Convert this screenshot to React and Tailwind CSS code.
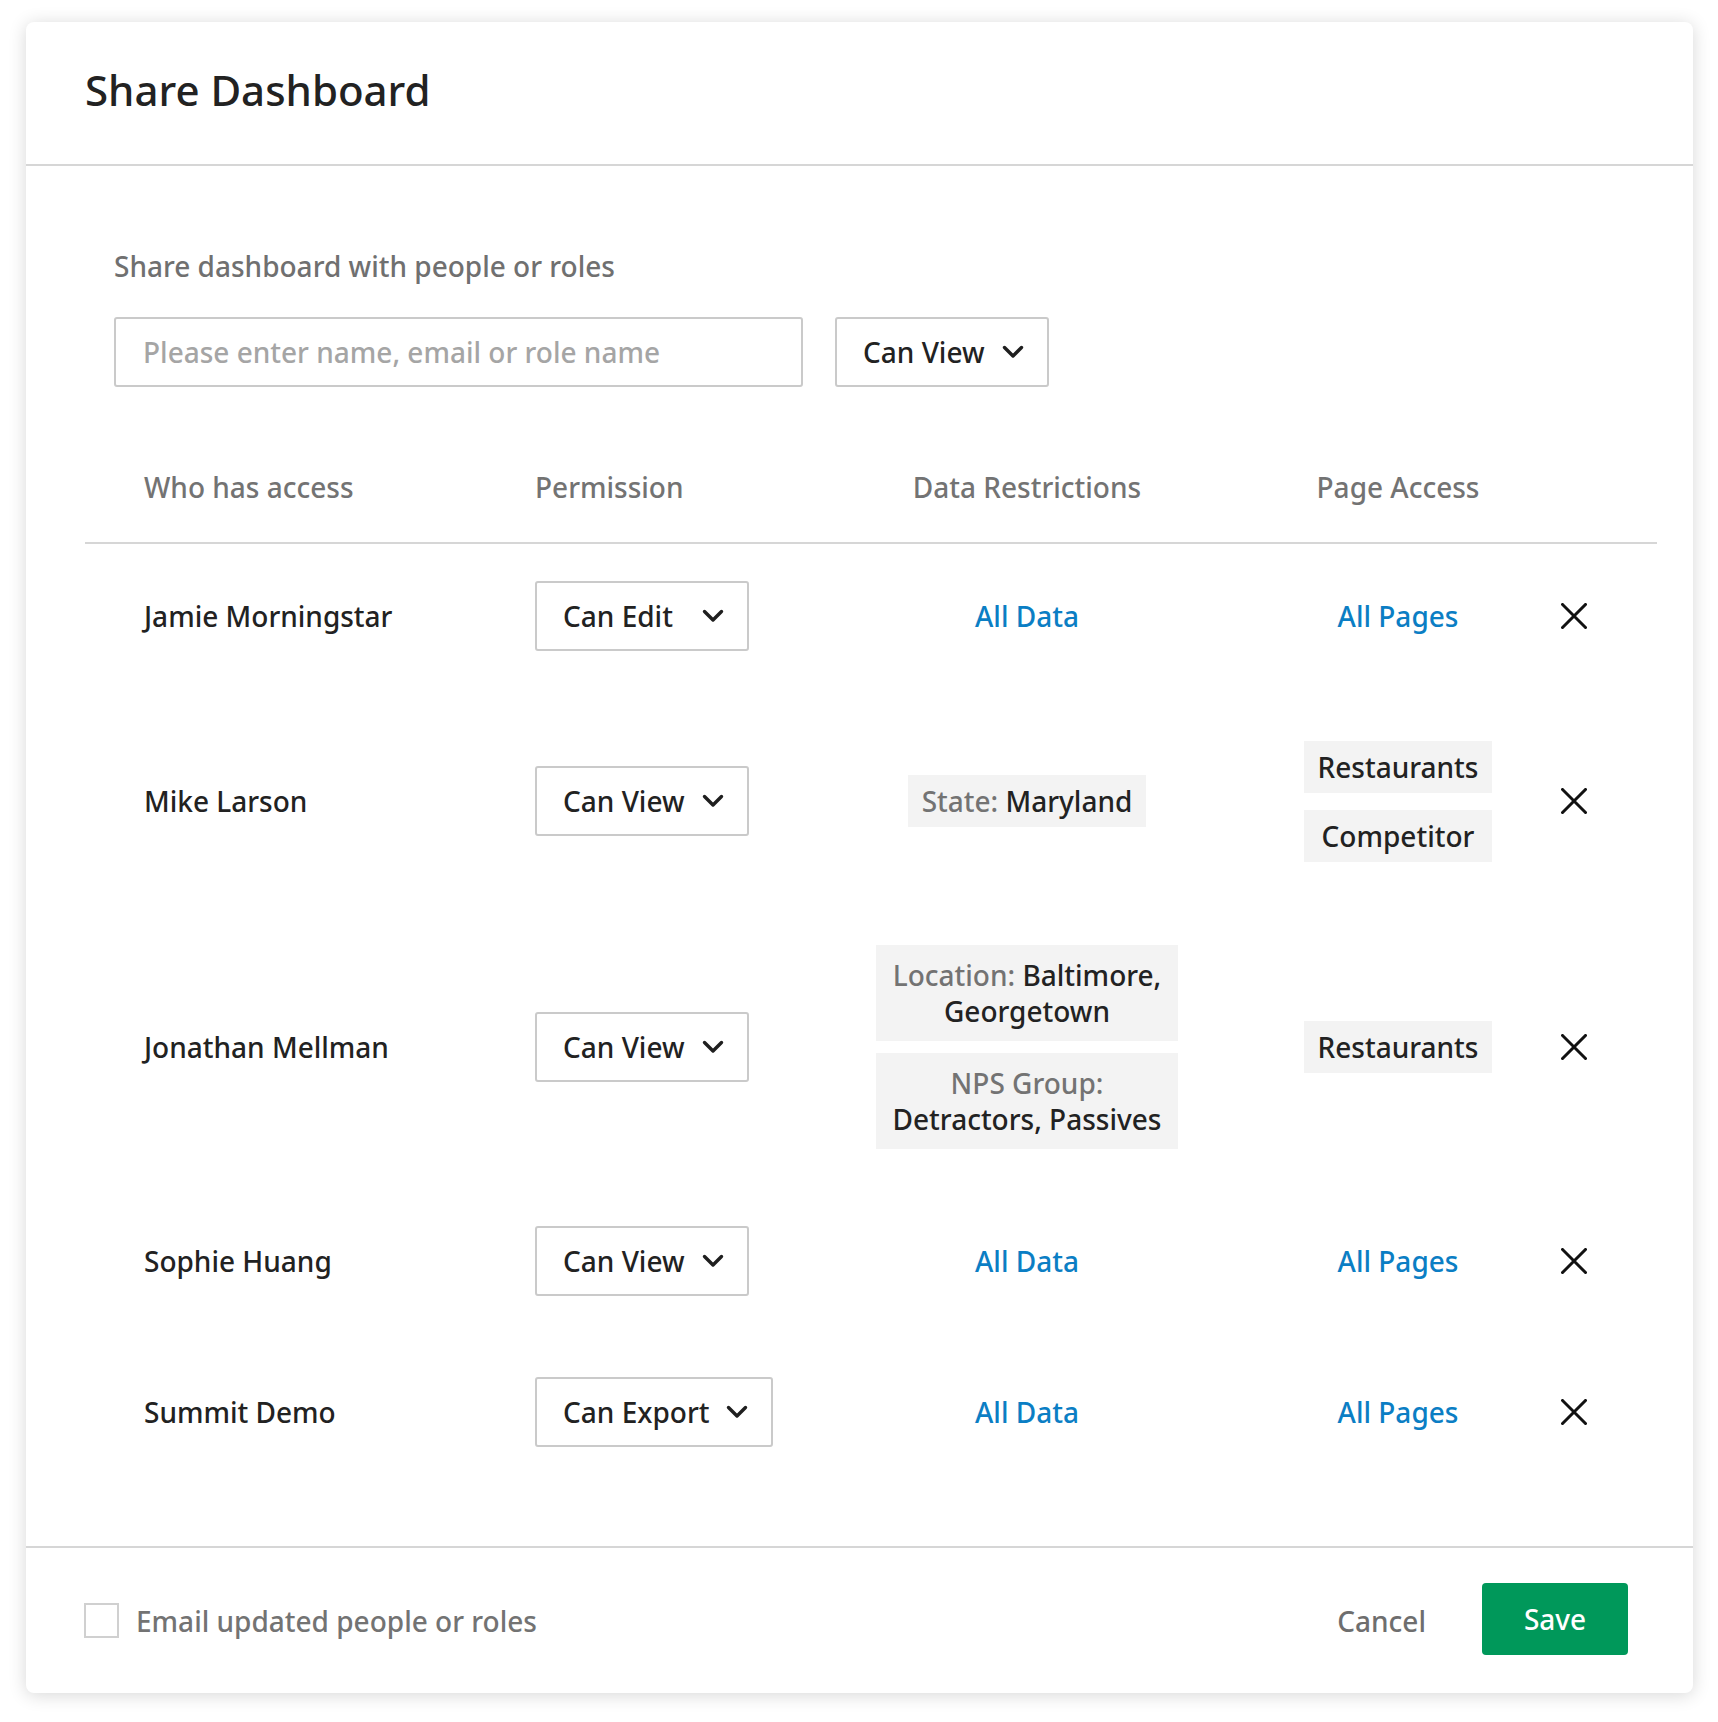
import React from 'react';

/**
 * ShareDashboard
 * Modal for sharing a dashboard with people or roles,
 * with per-user permission, data restrictions and page access.
 */

const Chevron = () => (
  <svg width="22" height="14" viewBox="0 0 22 14" fill="none" className="shrink-0">
    <path d="M2.5 2.5 L11 11 L19.5 2.5" stroke="#1f1f1f" strokeWidth="3.4" strokeLinecap="round" strokeLinejoin="round" />
  </svg>
);

const CloseX = () => (
  <svg width="26" height="26" viewBox="0 0 26 26" fill="none">
    <path d="M1.5 1.5 L24.5 24.5 M24.5 1.5 L1.5 24.5" stroke="#111" strokeWidth="3" strokeLinecap="square" />
  </svg>
);

const Select = ({ value }) => (
  <div className="inline-flex h-[70px] min-w-[214px] items-center justify-between gap-[17px] rounded-[3px] border-2 border-[#cacaca] bg-white pl-[26px] pr-[23px] text-[#222]">
    <span>{value}</span>
    <Chevron />
  </div>
);

// Grey chip used for restrictions and page names
const Tag = ({ label, value, wide }) => (
  <div className={`bg-[#f3f3f3] px-[14px] text-center text-[#222] ${wide ? 'py-[12px]' : 'py-[8px]'}`}>
    {label && <span className="text-[#737373]">{label} </span>}
    {value}
  </div>
);

const rows = [
  { name: 'Jamie Morningstar', perm: 'Can Edit', data: null, pages: null, h: 'h-[144px]' },
  {
    name: 'Mike Larson',
    perm: 'Can View',
    data: [{ label: 'State:', value: 'Maryland' }],
    pages: ['Restaurants', 'Competitor'],
    h: 'h-[226px]'
  },
  {
    name: 'Jonathan Mellman',
    perm: 'Can View',
    data: [
      { label: 'Location:', value: 'Baltimore, Georgetown' },
      { label: 'NPS Group:', value: 'Detractors, Passives' }
    ],
    pages: ['Restaurants'],
    h: 'h-[266px]'
  },
  { name: 'Sophie Huang', perm: 'Can View', data: null, pages: null, h: 'h-[162px]' },
  { name: 'Summit Demo', perm: 'Can Export', data: null, pages: null, h: 'h-[140px]' }
];

const App = () => {
  return (
    <div className="min-h-[1722px] bg-white pl-[26px] pt-[22px] font-['Noto_Sans','Open_Sans',sans-serif] text-[28px] font-medium leading-[36px]">
      <div className="flex w-[1667px] flex-col rounded-[8px] bg-white shadow-[0_2px_18px_rgba(0,0,0,0.16)]">
        {/* Header */}
        <div className="h-[144px] border-b-2 border-[#d6d6d6] pl-[59px] pt-[38px]">
          <h1 className="text-[42px] font-medium leading-[60px] text-[#222]">Share Dashboard</h1>
        </div>

        {/* Body */}
        <div className="pt-[82px] pb-[64px]">
          <div className="pl-[88px]">
            <div className="text-[#707070]">Share dashboard with people or roles</div>
            <div className="mt-[33px] flex gap-[32px]">
              <div className="flex h-[70px] w-[689px] items-center rounded-[3px] border-2 border-[#cacaca] pl-[27px] text-[#a5a5a5]">
                Please enter name, email or role name
              </div>
              <Select value="Can View" />
            </div>
          </div>

          <div className="ml-[59px] mr-[36px] mt-[82px]">
            <div className="grid grid-cols-[391px_292px_400px_334px_26px] border-b-2 border-[#d6d6d6] pb-[37px] pl-[59px] text-[#737373]">
              <div>Who has access</div>
              <div>Permission</div>
              <div className="text-center">Data Restrictions</div>
              <div className="pl-[8px] text-center">Page Access</div>
              <div />
            </div>

            {rows.map((row) => (
              <div key={row.name} className={`grid grid-cols-[391px_292px_400px_334px_26px] items-center pl-[59px] ${row.h}`}>
                <div className="text-[#222]">{row.name}</div>
                <div>
                  <Select value={row.perm} />
                </div>
                <div className="flex justify-center">
                  {row.data ? (
                    <div className="inline-flex max-w-[302px] flex-col items-stretch gap-[12px]">
                      {row.data.map((d) => (
                        <Tag key={d.label} label={d.label} value={d.value} wide={row.data.length > 1} />
                      ))}
                    </div>
                  ) : (
                    <span className="text-[#0b7ec4]">All Data</span>
                  )}
                </div>
                <div className="flex justify-center pl-[8px]">
                  {row.pages ? (
                    <div className="inline-flex flex-col items-stretch gap-[17px]">
                      {row.pages.map((p) => (
                        <Tag key={p} value={p} />
                      ))}
                    </div>
                  ) : (
                    <span className="text-[#0b7ec4]">All Pages</span>
                  )}
                </div>
                <div className="flex items-center">
                  <CloseX />
                </div>
              </div>
            ))}
          </div>
        </div>

        {/* Footer */}
        <div className="flex h-[147px] items-center border-t-2 border-[#d6d6d6] pl-[58px] pr-[65px]">
          <div className="h-[35px] w-[35px] border-2 border-[#d0d0d0]" />
          <span className="ml-[17px] text-[#737373]">Email updated people or roles</span>
          <div className="ml-auto flex items-center gap-[56px]">
            <button className="text-[#6e6e6e]">Cancel</button>
            <button className="mb-[3px] h-[72px] w-[146px] rounded-[4px] bg-[#00985a] text-white">Save</button>
          </div>
        </div>
      </div>
    </div>
  );
};

export default App;
